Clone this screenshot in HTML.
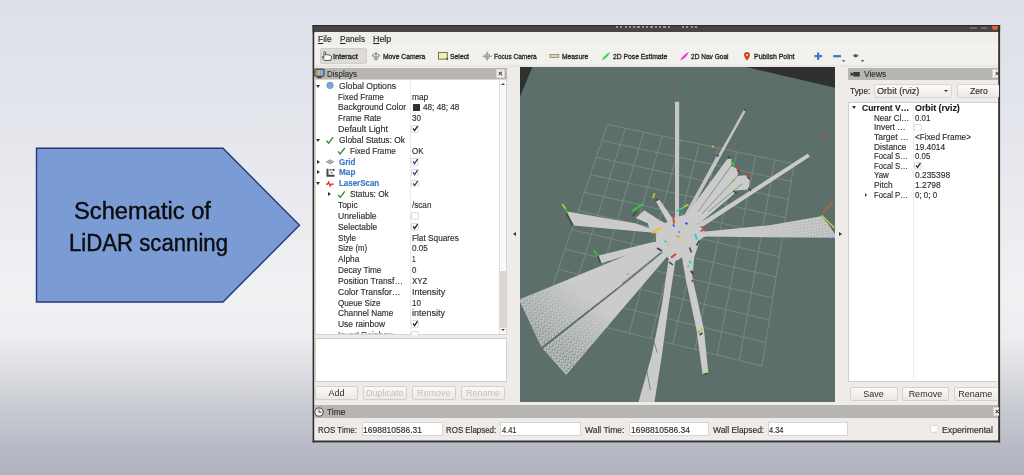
<!DOCTYPE html>
<html><head><meta charset="utf-8">
<style>
*{margin:0;padding:0;box-sizing:border-box}
html,body{width:1024px;height:475px;overflow:hidden}
body{font-family:"Liberation Sans",sans-serif;position:relative;
background:linear-gradient(180deg,#dde0e8 0%,#e5e7ed 30%,#f0f1f3 62%,#ecedf0 71%,#dcdde2 78.7%,#c8cad2 86.3%,#b8bbc6 94%,#aeb2be 100%);}
.a{position:absolute}
.t{position:absolute;white-space:nowrap;line-height:12px;height:12px;transform-origin:0 50%;filter:blur(0.3px);-webkit-text-stroke:0.15px currentColor}
.tb{-webkit-text-stroke:0.3px currentColor}
.t u{text-decoration-thickness:0.7px;text-underline-offset:1px}
#win{position:absolute;left:313px;top:26px;width:686px;height:415px;background:#eeebe9}
.hdr{position:absolute;background:#b8b6b3;height:11.5px}
.white{position:absolute;background:#fff;border:1px solid #d2cec9}
.btn{position:absolute;height:14px;border:1px solid #d3cfca;border-radius:2px;background:linear-gradient(#faf9f8,#ebe9e6);font-size:9px;line-height:12px;text-align:center;color:#2d2d2d;filter:blur(0.3px)}
.btn.dis{color:#c4c0bc}
.inp{position:absolute;height:13.5px;border:1px solid #d9d5d0;background:#fff}
.cb{position:absolute;width:7px;height:7px;border:1px solid #c4c0bb;background:#fff;border-radius:1px}
.cb.on::after{content:"";position:absolute;left:1.3px;top:-0.8px;width:2.2px;height:4.4px;border:solid #222;border-width:0 1.1px 1.1px 0;transform:rotate(40deg)}
.xb{position:absolute;width:9px;height:9px;background:#f4f3f1;border:1px solid #d6d3cf;border-radius:1px}
.xb::before,.xb::after{content:"";position:absolute;left:1.2px;top:3px;width:4.6px;height:1.1px;background:#444;transform:rotate(45deg)}
.xb::after{transform:rotate(-45deg)}
.tri-d{position:absolute;width:0;height:0;border-left:2.4px solid transparent;border-right:2.4px solid transparent;border-top:3.2px solid #333}
.tri-r{position:absolute;width:0;height:0;border-top:2.3px solid transparent;border-bottom:2.3px solid transparent;border-left:3px solid #333}
.tri-u{position:absolute;width:0;height:0;border-left:2.2px solid transparent;border-right:2.2px solid transparent;border-bottom:2.8px solid #444}
.tri-l{position:absolute;width:0;height:0;border-top:2.3px solid transparent;border-bottom:2.3px solid transparent;border-right:3px solid #333}
.clip{clip-path:inset(0 0 7.6px 0)}
#vp{position:absolute;left:520px;top:67px;width:315px;height:335px;background:#5d6f6a;overflow:hidden}
</style></head><body>

<!-- slide arrow -->
<svg class="a" style="left:0;top:0" width="320" height="475">
<polygon points="36.5,148.3 223,148.3 299.5,225.2 223,302 36.5,302" fill="#7a9bd4" stroke="#25397a" stroke-width="1.4" style="filter:blur(0.4px)"/>
</svg>
<div class="a" style="left:74px;top:194.5px;font-size:23px;line-height:32px;color:#0c0c0c;white-space:nowrap;transform-origin:0 0;transform:scaleX(1.03);-webkit-text-stroke:0.4px #0c0c0c;filter:blur(0.45px)">Schematic of</div>
<div class="a" style="left:69px;top:226.8px;font-size:23px;line-height:32px;color:#0c0c0c;white-space:nowrap;transform-origin:0 0;transform:scaleX(0.964);-webkit-text-stroke:0.4px #0c0c0c;filter:blur(0.45px)">LiDAR scanning</div>

<!-- window -->
<div id="win"></div>
<svg class="a" style="left:0;top:0;filter:blur(0.35px)" width="1024" height="475"><rect x="312.6" y="25.1" width="687.5" height="7.3" fill="#474645"/><rect x="312.6" y="25.1" width="687.5" height="1.2" fill="#2c2c2b"/><rect x="312.6" y="25.1" width="1.6" height="417.3" fill="#2e2e2d"/><rect x="998.2" y="25.1" width="1.9" height="417.3" fill="#33322f"/><rect x="312.6" y="440.5" width="687.5" height="1.9" fill="#333231"/></svg>
<!-- title text remnants -->
<div class="a" style="left:616px;top:26.2px;width:53.5px;height:2px;background:repeating-linear-gradient(90deg,#a9a8a6 0 2.2px,#474645 2.2px 4.3px);opacity:.85;filter:blur(0.5px)"></div>
<div class="a" style="left:682px;top:26.2px;width:17px;height:2px;background:repeating-linear-gradient(90deg,#a9a8a6 0 2.2px,#474645 2.2px 4.3px);opacity:.85;filter:blur(0.5px)"></div>
<div class="a" style="left:970px;top:27.4px;width:7px;height:1.4px;background:#6e6d6b;filter:blur(0.6px)"></div><div class="a" style="left:980.5px;top:27.4px;width:6px;height:1.4px;background:#6e6d6b;filter:blur(0.6px)"></div>
<div class="a" style="left:991.8px;top:26.2px;width:6.2px;height:3.4px;background:#e0632a;border-radius:0 0 3px 3px;filter:blur(0.5px)"></div>
<!-- menubar / toolbar backgrounds -->
<div class="a" style="left:314.6px;top:32.4px;width:683.4px;height:12.4px;background:#f0eeeb"></div>
<div class="a" style="left:314.6px;top:44.8px;width:683.4px;height:22px;background:linear-gradient(#f7f6f3 0,#f3f1ed 15%,#f2f0ec 85%,#e6e4e0 100%)"></div>
<div class="a" style="left:319.7px;top:47.8px;width:47.6px;height:16.6px;background:#dddbd8;border:1px solid #d2cfcb;border-radius:2px"></div>

<!-- toolbar icons -->
<svg class="a" style="left:313px;top:47px;filter:blur(0.3px)" width="687" height="19" viewBox="313 47 687 19">
<!-- hand -->
<path d="M324 56 V52.3 q0.75 -1.3 1.5 0 V55 q0.8 -0.9 1.6 0 q0.8 -0.8 1.6 0.2 q0.9 -0.6 1.7 0.3 q1.2 0 1.2 1.4 L331 60.4 H324.3 L322.2 57.5 q-0.3 -1.2 0.8 -0.8 L324 57.9 Z" fill="#fbfbfb" stroke="#3a3a3a" stroke-width="0.85" stroke-linejoin="round"/>
<!-- move camera -->
<g stroke="#777" stroke-width="0.9" fill="none"><path d="M372 55.5 l4 -2.2 l4 2.2 l-4 2.2z"/><path d="M376 52 v8 M373.5 58 l2.5 2.3 l2.5 -2.3"/></g>
<!-- select -->
<rect x="438.5" y="52.5" width="8.8" height="6.6" fill="#f3f0a8" stroke="#555" stroke-width="0.8"/>
<path d="M446 58 l1.8 1.8" stroke="#222" stroke-width="1"/>
<!-- focus camera -->
<g stroke="#888" stroke-width="0.9" fill="none"><circle cx="487.2" cy="56.2" r="2.4"/><path d="M487.2 51.5 v9.4 M482.5 56.2 h9.4"/></g>
<!-- measure -->
<rect x="550" y="54.6" width="8.8" height="3" fill="#d9d6a8" stroke="#777" stroke-width="0.7"/>
<!-- 2D pose -->
<path d="M601.6 60.4 Q604.4 54.6 610.2 52 Q608 57.8 601.6 60.4z" fill="#2fd858"/>
<!-- 2D nav -->
<path d="M680.2 60.4 Q683 54.6 688.8 52 Q686.6 57.8 680.2 60.4z" fill="#e63ad6"/>
<!-- publish point -->
<path d="M747 52 a3 3 0 0 1 3 3 q0 2 -3 5.6 q-3 -3.6 -3 -5.6 a3 3 0 0 1 3 -3z" fill="#d0481c"/><circle cx="747" cy="54.9" r="1" fill="#f6d8c8"/>
<!-- plus / minus / camera -->
<path d="M818.2 52.4 v7.6 M814.4 56.2 h7.6" stroke="#3c78c8" stroke-width="2.2"/>
<path d="M833.2 56.2 h7.8" stroke="#3c78c8" stroke-width="2.2"/>
<path d="M842 60.2 h3.2 l-1.6 1.8z" fill="#333"/>
<path d="M852.4 55.8 q3.2 -3.4 6.6 0 q-3.4 3.2 -6.6 0z" fill="#888"/><circle cx="855.7" cy="55.8" r="1.3" fill="#444"/>
<path d="M861 60.2 h3.2 l-1.6 1.8z" fill="#333"/>
</svg>

<!-- Displays panel -->
<div class="hdr" style="left:315px;top:67.8px;width:191.5px"></div>
<svg class="a" style="left:313.6px;top:68px;filter:blur(0.3px)" width="12" height="12" viewBox="0 0 12 12">
<rect x="0.6" y="1" width="9.6" height="7.4" rx="0.8" fill="#667" stroke="#333" stroke-width="0.7"/>
<rect x="1.5" y="1.9" width="2.6" height="5.6" fill="#dc8478"/><rect x="4.1" y="1.9" width="2.6" height="5.6" fill="#98cc98"/><rect x="6.7" y="1.9" width="2.6" height="5.6" fill="#8cacdc"/>
<rect x="3.4" y="9" width="4" height="1.2" fill="#333"/>
</svg>
<div class="xb" style="left:496px;top:68.6px"></div>
<div class="white" style="left:315px;top:79.3px;width:191.5px;height:255.4px;border-color:#d8d5d0"></div>
<div class="a" style="left:410px;top:80px;width:1px;height:254px;background:#ecebe9"></div>
<!-- scrollbar -->
<div class="a" style="left:499px;top:80px;width:7px;height:254px;background:#fafafa;border-left:1px solid #dcdad7"></div>
<div class="a" style="left:500px;top:270.5px;width:6px;height:57px;background:#d9d8d6"></div>
<div class="tri-u" style="left:500.6px;top:83.4px"></div>
<div class="tri-d" style="left:500.5px;top:329.2px;border-top-color:#444;border-left-width:2.2px;border-right-width:2.2px;border-top-width:2.8px"></div>
<!-- lower white box -->
<div class="white" style="left:315px;top:337.5px;width:191.5px;height:44px"></div>
<!-- buttons -->
<div class="btn" style="left:315px;top:386px;width:43px">Add</div>
<div class="btn dis" style="left:362.6px;top:386px;width:44.3px">Duplicate</div>
<div class="btn dis" style="left:411.5px;top:386px;width:44.5px">Remove</div>
<div class="btn dis" style="left:460.7px;top:386px;width:44.6px">Rename</div>

<!-- tree arrows + icons -->
<div class="tri-d" style="left:316px;top:84.6px"></div>
<div class="tri-d" style="left:316px;top:138.8px"></div>
<div class="tri-r" style="left:316.8px;top:159.5px"></div>
<div class="tri-r" style="left:316.8px;top:170.4px"></div>
<div class="tri-d" style="left:316px;top:182.2px"></div>
<div class="tri-r" style="left:327.8px;top:192.1px"></div>
<svg class="a" style="left:313px;top:79px;filter:blur(0.3px)" width="100" height="130" viewBox="313 79 100 130">
<circle cx="330" cy="85.4" r="3.3" fill="#7ea6d8" stroke="#6a92c6" stroke-width="0.6"/>
<path d="M326.4 140.6 l2.2 2.6 l4.6 -6" stroke="#2f8a3a" stroke-width="1.3" fill="none"/>
<path d="M338 151.4 l2.2 2.6 l4.6 -6" stroke="#2f8a3a" stroke-width="1.3" fill="none"/>
<path d="M338 194.8 l2.2 2.6 l4.6 -6" stroke="#2f8a3a" stroke-width="1.3" fill="none"/>
<!-- grid icon -->
<g stroke="#777" stroke-width="0.8" fill="none"><path d="M326.4 161.8 l3.6 -2 l3.6 2 l-3.6 2z M328.2 160.8 l3.6 2 M331.8 160.8 l-3.6 2"/></g>
<!-- map icon -->
<path d="M326.5 168.8 h2 v6 h6 v2 h-8z" fill="#444"/><rect x="329.6" y="169" width="1.8" height="1.8" fill="#666"/><rect x="332.4" y="169" width="2" height="1.8" fill="#333"/><rect x="330.5" y="172" width="2" height="1.6" fill="#888"/>
<!-- laserscan icon -->
<path d="M326 184.2 h1.6 l1 -2.2 l1.6 4 l1 -1.8 h2.6" stroke="#e02828" stroke-width="1.2" fill="none"/>
</svg>
<!-- colour swatch -->
<div class="a" style="left:412.8px;top:104.3px;width:7.2px;height:7.2px;background:#303030"></div>
<!-- checkboxes -->

<!-- splitter arrows -->
<div class="tri-l" style="left:512.8px;top:232.3px"></div>
<div class="tri-r" style="left:838.5px;top:232.3px"></div>

<!-- viewport -->
<div id="vp"><svg width="316" height="335" viewBox="0 0 316 335" style="position:absolute;left:0;top:0">
<defs>
<pattern id="dots" width="4.2" height="4" patternUnits="userSpaceOnUse" patternTransform="rotate(-38)"><rect width="4.2" height="4" fill="#cdcfcf"/><g fill="#5c706c"><rect x="0.2" y="0.3" width="1.4" height="1.1"/><rect x="2.3" y="1.5" width="1.3" height="1.1"/><rect x="0.7" y="2.7" width="1.4" height="1.1"/><rect x="3.1" y="3.2" width="1.1" height="0.8"/><rect x="3.1" y="0" width="1.1" height="0.4"/></g></pattern>
<linearGradient id="fade1" gradientUnits="userSpaceOnUse" x1="80" y1="195" x2="20" y2="268"><stop offset="0" stop-color="#fff" stop-opacity="0"/><stop offset="0.35" stop-color="#fff" stop-opacity="0"/><stop offset="1" stop-color="#fff" stop-opacity="1"/></linearGradient>
<pattern id="dots2" width="3" height="3" patternUnits="userSpaceOnUse" patternTransform="rotate(-8)"><rect width="3" height="3" fill="#cbcbcb"/><rect x="0.4" y="0.4" width="1.2" height="1.2" fill="#66797a"/></pattern>
<linearGradient id="fade2" gradientUnits="userSpaceOnUse" x1="220" y1="0" x2="316" y2="0"><stop offset="0" stop-color="#fff" stop-opacity="0"/><stop offset="1" stop-color="#fff" stop-opacity="0.8"/></linearGradient>
<mask id="m2"><rect width="316" height="335" fill="url(#fade2)"/></mask>
<mask id="m1"><rect width="316" height="335" fill="url(#fade1)"/></mask>
<filter id="b"><feGaussianBlur stdDeviation="0.45"/></filter>
</defs>
<polygon points="0,0 12.5,0 0,29.5" fill="#303030"/>
<polygon points="226,0 316,0 316,21" fill="#303030"/>
<g stroke="#7d918b" stroke-width="0.75" fill="none" filter="url(#b)"><line x1="87.4" y1="57.4" x2="24.0" y2="245.0"/><line x1="87.4" y1="57.4" x2="274.0" y2="97.0"/><line x1="105.5" y1="61.2" x2="45.1" y2="250.2"/><line x1="81.9" y1="73.6" x2="271.2" y2="114.4"/><line x1="123.8" y1="65.1" x2="66.3" y2="255.5"/><line x1="76.3" y1="90.3" x2="268.4" y2="132.3"/><line x1="142.1" y1="69.0" x2="87.7" y2="260.8"/><line x1="70.5" y1="107.5" x2="265.5" y2="150.8"/><line x1="160.6" y1="72.9" x2="109.2" y2="266.1"/><line x1="64.4" y1="125.3" x2="262.5" y2="169.9"/><line x1="179.2" y1="76.9" x2="130.9" y2="271.5"/><line x1="58.2" y1="143.7" x2="259.3" y2="189.6"/><line x1="197.9" y1="80.9" x2="152.8" y2="276.9"/><line x1="51.8" y1="162.6" x2="256.1" y2="210.0"/><line x1="216.8" y1="84.9" x2="174.9" y2="282.4"/><line x1="45.2" y1="182.2" x2="252.8" y2="231.1"/><line x1="235.7" y1="88.9" x2="197.1" y2="287.9"/><line x1="38.4" y1="202.4" x2="249.3" y2="252.9"/><line x1="254.8" y1="92.9" x2="219.4" y2="293.4"/><line x1="31.3" y1="223.3" x2="245.7" y2="275.6"/><line x1="274.0" y1="97.0" x2="242.0" y2="299.0"/><line x1="24.0" y1="245.0" x2="242.0" y2="299.0"/></g>
<g filter="url(#b)"><polygon points="155.0,34.8 159.2,34.8 159.0,161.0 155.0,161.0" fill="#c6c6c6" /><polygon points="224.0,42.6 225.9,43.8 167.0,151.0 163.6,149.4" fill="#c3c3c3" /><polygon points="196.6,89.2 198.4,90.3 166.0,153.0 162.6,151.4" fill="#c3c3c3" /><polygon points="206.9,92.5 211.5,91.0 211.0,99.0 218.5,102.0 217.5,109.0 227.5,108.0 230.0,111.5 228.5,122.5 216.0,123.5 214.0,127.0 180.0,156.0 166.0,161.0 164.0,151.0" fill="#cbcbcb" /><polygon points="287.6,86.8 290.0,89.4 183.0,159.5 175.0,159.0" fill="#cbcbcb" /><polygon points="301.7,149.3 308.0,157.0 315.0,167.5 315.0,170.4 250.0,170.2 186.0,169.5 176.0,173.0 170.0,163.0 186.0,164.5 250.0,158.2" fill="#cbcbcb" /><polygon points="182.5,306.8 188.3,306.0 184.0,263.0 173.0,213.0 168.0,185.0 160.0,179.0 165.9,213.0 176.5,263.0" fill="#cbcbcb" /><polygon points="118.5,335.0 134.5,335.0 141.9,288.0 148.7,238.0 155.5,193.0 157.5,187.0 152.0,183.0 148.5,193.0 141.9,238.0 131.8,288.0" fill="#cbcbcb" /><polygon points="-0.9,232.7 21.4,279.8 108.0,212.6 144.0,183.0 150.0,173.0 131.5,178.0" fill="#cbcbcb" /><polygon points="23.0,281.8 46.2,307.8 145.2,191.8 154.0,181.0 144.0,184.5 109.0,213.4" fill="#cbcbcb" /><polygon points="77.9,188.8 80.7,196.4 132.9,180.3 148.0,173.0 131.0,175.5" fill="#cbcbcb" /><polygon points="45.7,144.3 53.3,158.5 131.0,165.5 148.0,167.0 129.0,161.3 115.8,156.6" fill="#cbcbcb" /><polygon points="115.8,150.9 124.3,143.3 140.4,153.7 152.0,159.0 148.0,169.0 138.5,165.0 129.0,161.3 128.1,156.6" fill="#cbcbcb" /><polygon points="135.7,134.0 139.3,132.6 156.5,157.0 151.0,161.0" fill="#cbcbcb" /><polygon points="142.0,159.0 152.0,151.0 164.0,148.0 174.0,155.0 183.0,162.0 186.0,167.0 180.0,173.0 177.0,182.0 174.0,191.0 173.0,204.0 168.0,201.0 164.0,189.0 158.0,193.0 152.0,195.0 144.0,187.0 136.0,179.0 136.0,167.0" fill="#cbcbcb" /></g>
<g mask="url(#m1)">
<polygon points="-0.9,232.7 21.4,279.8 108.0,212.6 144.0,183.0 150.0,173.0 131.5,178.0" fill="url(#dots)" />
<polygon points="23.0,281.8 46.2,307.8 145.2,191.8 154.0,181.0 144.0,184.5 109.0,213.4" fill="url(#dots)" />
</g>
<g stroke="#6f817d" stroke-width="0.9" filter="url(#b)" opacity="0.85"><line x1="211" y1="99" x2="178" y2="145"/><line x1="217.5" y1="109" x2="182" y2="147"/><line x1="222" y1="117" x2="188" y2="145"/></g>
<g mask="url(#m2)"><polygon points="301.7,149.3 308.0,157.0 315.0,167.5 315.0,170.4 250.0,170.2 186.0,169.5 186.0,164.5 250.0,158.2" fill="url(#dots2)" /></g>
<g stroke="#3d4a48" stroke-width="1.6" filter="url(#b)"><line x1="207.8" y1="89.8" x2="211.2" y2="91.3"/><line x1="217.0" y1="103.0" x2="220.0" y2="105.0"/><line x1="227.0" y1="109.5" x2="230.0" y2="112.5"/><line x1="228.0" y1="121.2" x2="231.0" y2="123.8"/><line x1="213.5" y1="124.0" x2="216.5" y2="126.0"/><line x1="46.0" y1="145.5" x2="53.0" y2="158.5"/><line x1="112.5" y1="149.0" x2="116.5" y2="145.0"/><line x1="135.5" y1="133.8" x2="138.5" y2="132.2"/><line x1="77.9" y1="188.8" x2="80.7" y2="196.4"/><line x1="184.5" y1="307.3" x2="187.5" y2="306.3"/><line x1="179.5" y1="268.0" x2="182.5" y2="266.0"/><line x1="169.5" y1="180.5" x2="171.5" y2="185.5"/><line x1="137.0" y1="181.0" x2="142.0" y2="184.0"/><line x1="149.0" y1="195.2" x2="153.0" y2="197.8"/><line x1="170.5" y1="204.2" x2="173.5" y2="206.8"/><line x1="176.5" y1="178.5" x2="179.5" y2="173.5"/><line x1="196.3" y1="87.9" x2="198.7" y2="89.3"/><line x1="224.0" y1="42.5" x2="226.0" y2="43.5"/></g>
<g stroke="#66787a" stroke-width="0.8" filter="url(#b)"><line x1="131.79999999999995" y1="275.4" x2="134.60000000000002" y2="285.6" transform="translate(2.5,0)"/><line x1="126.60000000000002" y1="302.7" x2="130.39999999999998" y2="323.2"/><line x1="102" y1="216.60000000000002" x2="140" y2="186" stroke="#55696a" stroke-width="0.7"/></g>
<g stroke-width="1.8" stroke-linecap="butt" filter="url(#b)"><line x1="154.3" y1="24.5" x2="156.5" y2="24.5" stroke="#b8405a" stroke-width="2"/><line x1="301.7" y1="70.0" x2="304.3" y2="70.0" stroke="#b8405a" stroke-width="2.4"/><line x1="208.0" y1="81.5" x2="211.0" y2="82.5" stroke="#c8503c" stroke-width="1.6"/><line x1="192.2" y1="78.8" x2="193.8" y2="80.2" stroke="#cc4" stroke-width="1.6"/><line x1="195.0" y1="81.0" x2="197.0" y2="83.0" stroke="#c44" stroke-width="1.4"/><line x1="303.2" y1="146.3" x2="312.8" y2="133.7" stroke="#c8642e" stroke-width="1.3"/><line x1="301.7" y1="148.1" x2="314.3" y2="160.8" stroke="#c6d62e" stroke-width="1.3"/><line x1="45.8" y1="142.0" x2="42.2" y2="137.0" stroke="#b4d23a" stroke-width="1.6"/><line x1="45.8" y1="142.5" x2="47.8" y2="146.5" stroke="#3cbc3c" stroke-width="1.8"/><line x1="112.0" y1="144.3" x2="123.4" y2="136.7" stroke="#3cc83c" stroke-width="1.8"/><line x1="132.9" y1="130.9" x2="134.7" y2="126.2" stroke="#b8d030" stroke-width="1.8"/><line x1="73.7" y1="183.0" x2="77.5" y2="188.4" stroke="#3cbc3c" stroke-width="1.8"/><line x1="180.5" y1="263.5" x2="183.5" y2="261.5" stroke="#9cdc30" stroke-width="2"/><line x1="177.8" y1="265.0" x2="179.8" y2="265.0" stroke="#e88440" stroke-width="2"/><line x1="184.8" y1="304.1" x2="186.6" y2="304.7" stroke="#d2dc30" stroke-width="2"/><line x1="211.2" y1="94.5" x2="213.8" y2="98.5" stroke="#48cc48" stroke-width="1.8"/><line x1="216.5" y1="100.8" x2="219.0" y2="102.8" stroke="#dc3c3c" stroke-width="2"/><line x1="226.1" y1="107.5" x2="229.1" y2="109.5" stroke="#dc3c3c" stroke-width="2.2"/><line x1="212.8" y1="114.2" x2="214.2" y2="112.8" stroke="#48cc48" stroke-width="1.6"/><line x1="212.1" y1="116.5" x2="213.9" y2="116.5" stroke="#dcdc40" stroke-width="1.6"/><line x1="154.0" y1="156.6" x2="153.2" y2="149.1" stroke="#b85c30" stroke-width="2"/><line x1="156.5" y1="144.3" x2="165.0" y2="139.5" stroke="#30d090" stroke-width="1.8"/><line x1="164.5" y1="139.5" x2="168.5" y2="137.5" stroke="#c8d030" stroke-width="1.8"/><line x1="165.5" y1="155.9" x2="167.3" y2="157.1" stroke="#3c3cdc" stroke-width="2"/><line x1="153.2" y1="157.4" x2="154.2" y2="159.6" stroke="#3c50dc" stroke-width="1.8"/><line x1="180.5" y1="164.1" x2="186.2" y2="161.6" stroke="#dc3c30" stroke-width="2"/><line x1="175.0" y1="167.0" x2="177.0" y2="172.6" stroke="#30d0d0" stroke-width="2.2"/><line x1="132.2" y1="166.0" x2="140.8" y2="160.3" stroke="#eac030" stroke-width="2.2"/><line x1="127.0" y1="152.5" x2="129.0" y2="152.5" stroke="#c8d04c" stroke-width="1.6"/><line x1="144.6" y1="173.7" x2="146.6" y2="175.3" stroke="#30d0d0" stroke-width="2"/><line x1="147.4" y1="176.2" x2="149.4" y2="177.4" stroke="#eacc30" stroke-width="2"/><line x1="151.2" y1="190.6" x2="156.0" y2="186.8" stroke="#e04428" stroke-width="2"/><line x1="169.2" y1="193.6" x2="171.2" y2="196.4" stroke="#30d0c0" stroke-width="2"/><line x1="167.4" y1="199.2" x2="169.2" y2="199.2" stroke="#50d050" stroke-width="1.8"/><line x1="171.8" y1="212.9" x2="173.2" y2="215.1" stroke="#a83c3c" stroke-width="1.6"/><line x1="156.5" y1="169.0" x2="159.5" y2="170.0" stroke="#e88440" stroke-width="1.6"/><line x1="162.0" y1="173.5" x2="164.0" y2="172.5" stroke="#cccc3c" stroke-width="1.6"/><line x1="158.0" y1="164.8" x2="160.0" y2="165.2" stroke="#3c8cdc" stroke-width="1.4"/><line x1="107.0" y1="206.7" x2="109.0" y2="207.3" stroke="#e8943c" stroke-width="1.6"/></g>
</svg></div>

<!-- Views panel -->
<div class="hdr" style="left:848.3px;top:68.3px;width:149.7px"></div>
<svg class="a" style="left:850px;top:70px;filter:blur(0.3px)" width="11" height="8" viewBox="0 0 11 8"><path d="M0.6 2.2 l2.6 1.4 v-1.6 h6.6 v4.4 h-6.6 v-1.6 l-2.6 1.4z" fill="#3a3a3a"/></svg>
<div class="xb" style="left:992.4px;top:69px;width:6px;border-right:none"></div>
<div class="inp" style="left:873.9px;top:84px;width:78.2px;height:13.6px;background:linear-gradient(#fbfaf9,#efedea);border-radius:2px"></div>
<div class="tri-d" style="left:944.4px;top:90.4px;border-left-width:2px;border-right-width:2px;border-top-width:2.6px"></div>
<div class="inp" style="left:956.5px;top:84px;width:42px;height:13.6px;background:linear-gradient(#fbfaf9,#ebe9e6);border-radius:2px;border-right:none"></div>
<div class="white" style="left:848.2px;top:102.3px;width:150px;height:280px;border-right:none"></div>
<div class="a" style="left:912.6px;top:103px;width:1px;height:278.6px;background:#ecebe9"></div>
<div class="tri-d" style="left:852px;top:106px"></div>
<div class="tri-r" style="left:864.6px;top:192.8px;border-left-width:2.6px;border-top-width:2px;border-bottom-width:2px"></div>
<div class="btn" style="left:849.5px;top:386.6px;width:48px">Save</div>
<div class="btn" style="left:901.7px;top:386.6px;width:47.4px">Remove</div>
<div class="btn" style="left:953.6px;top:386.6px;width:44.3px;border-right:none;border-radius:2px 0 0 2px;padding-right:2px">Rename</div>

<!-- Time panel -->
<div class="hdr" style="left:314.3px;top:405.4px;width:683.7px;height:12.2px"></div>
<svg class="a" style="left:314px;top:407px;filter:blur(0.3px)" width="10" height="10" viewBox="0 0 10 10"><circle cx="5" cy="5.1" r="4.1" fill="#f6f6f6" stroke="#3a3a3a" stroke-width="0.9"/><path d="M5 2.6 V5.2 H7.4" stroke="#333" stroke-width="0.9" fill="none"/></svg>
<div class="xb" style="left:992.8px;top:407.4px;width:6px;height:8.4px;border-right:none"></div>
<div class="inp" style="left:361.5px;top:422.3px;width:81px"></div>
<div class="inp" style="left:500.4px;top:422.3px;width:81px"></div>
<div class="inp" style="left:628.8px;top:422.3px;width:80.4px"></div>
<div class="inp" style="left:767.7px;top:422.3px;width:80px"></div>

<svg class="a" style="left:411.1px;top:125.3px;filter:blur(0.3px)" width="7.8" height="7.8" viewBox="-0.5 -0.5 7.8 7.8"><rect x="0" y="0" width="6.8" height="6.8" rx="0.8" fill="#fff" stroke="#d0ced2" stroke-width="0.8"/><path d="M1.63 2.86 L3.06 5.03 L6.12 0.68" stroke="#1e1e1e" stroke-width="1.25" fill="none"/></svg>
<svg class="a" style="left:411.1px;top:157.8px;filter:blur(0.3px)" width="7.8" height="7.8" viewBox="-0.5 -0.5 7.8 7.8"><rect x="0" y="0" width="6.8" height="6.8" rx="0.8" fill="#fff" stroke="#d0ced2" stroke-width="0.8"/><path d="M1.63 2.86 L3.06 5.03 L6.12 0.68" stroke="#2b3f78" stroke-width="1.25" fill="none"/></svg>
<svg class="a" style="left:411.1px;top:168.6px;filter:blur(0.3px)" width="7.8" height="7.8" viewBox="-0.5 -0.5 7.8 7.8"><rect x="0" y="0" width="6.8" height="6.8" rx="0.8" fill="#fff" stroke="#d0ced2" stroke-width="0.8"/><path d="M1.63 2.86 L3.06 5.03 L6.12 0.68" stroke="#2b3f78" stroke-width="1.25" fill="none"/></svg>
<svg class="a" style="left:411.1px;top:179.5px;filter:blur(0.3px)" width="7.8" height="7.8" viewBox="-0.5 -0.5 7.8 7.8"><rect x="0" y="0" width="6.8" height="6.8" rx="0.8" fill="#fff" stroke="#d0ced2" stroke-width="0.8"/><path d="M1.63 2.86 L3.06 5.03 L6.12 0.68" stroke="#2b3f78" stroke-width="1.25" fill="none"/></svg>
<svg class="a" style="left:411.1px;top:212.0px;filter:blur(0.3px)" width="7.8" height="7.8" viewBox="-0.5 -0.5 7.8 7.8"><rect x="0" y="0" width="6.8" height="6.8" rx="0.8" fill="#fff" stroke="#d0ced2" stroke-width="0.8"/></svg>
<svg class="a" style="left:411.1px;top:222.8px;filter:blur(0.3px)" width="7.8" height="7.8" viewBox="-0.5 -0.5 7.8 7.8"><rect x="0" y="0" width="6.8" height="6.8" rx="0.8" fill="#fff" stroke="#d0ced2" stroke-width="0.8"/><path d="M1.63 2.86 L3.06 5.03 L6.12 0.68" stroke="#1e1e1e" stroke-width="1.25" fill="none"/></svg>
<svg class="a" style="left:411.1px;top:320.4px;filter:blur(0.3px)" width="7.8" height="7.8" viewBox="-0.5 -0.5 7.8 7.8"><rect x="0" y="0" width="6.8" height="6.8" rx="0.8" fill="#fff" stroke="#d0ced2" stroke-width="0.8"/><path d="M1.63 2.86 L3.06 5.03 L6.12 0.68" stroke="#1e1e1e" stroke-width="1.25" fill="none"/></svg>
<svg class="a" style="left:411.1px;top:331.2px;filter:blur(0.3px)" width="7.8" height="3.4" viewBox="-0.5 -0.5 7.8 3.4"><rect x="0" y="0" width="6.8" height="6.8" rx="0.8" fill="#fff" stroke="#d0ced2" stroke-width="0.8"/></svg>
<svg class="a" style="left:914.1px;top:123.5px;filter:blur(0.3px)" width="7.6" height="7.6" viewBox="-0.5 -0.5 7.6 7.6"><rect x="0" y="0" width="6.6" height="6.6" rx="0.8" fill="#fff" stroke="#d0ced2" stroke-width="0.8"/></svg>
<svg class="a" style="left:914.1px;top:162.1px;filter:blur(0.3px)" width="7.6" height="7.6" viewBox="-0.5 -0.5 7.6 7.6"><rect x="0" y="0" width="6.6" height="6.6" rx="0.8" fill="#fff" stroke="#d0ced2" stroke-width="0.8"/><path d="M1.58 2.77 L2.97 4.88 L5.94 0.66" stroke="#1e1e1e" stroke-width="1.25" fill="none"/></svg>
<svg class="a" style="left:929.7px;top:425.1px;filter:blur(0.3px)" width="7.8" height="7.8" viewBox="-0.5 -0.5 7.8 7.8"><rect x="0" y="0" width="6.8" height="6.8" rx="0.8" fill="#fff" stroke="#d0ced2" stroke-width="0.8"/></svg>
<!-- all text -->
<div class="t " style="left:317.9px;top:33.0px;font-size:9.8px;color:#222;transform:scaleX(0.861);"><u>F</u>ile</div>
<div class="t " style="left:340.0px;top:33.0px;font-size:9.8px;color:#222;transform:scaleX(0.834);"><u>P</u>anels</div>
<div class="t " style="left:373.4px;top:33.0px;font-size:9.8px;color:#222;transform:scaleX(0.903);"><u>H</u>elp</div>
<div class="t tb" style="left:333.3px;top:50.7px;font-size:7.4px;color:#222;transform:scaleX(1.002);">Interact</div>
<div class="t tb" style="left:382.7px;top:50.7px;font-size:7.4px;color:#222;transform:scaleX(0.911);">Move Camera</div>
<div class="t tb" style="left:449.6px;top:50.7px;font-size:7.4px;color:#222;transform:scaleX(0.925);">Select</div>
<div class="t tb" style="left:494.3px;top:50.7px;font-size:7.4px;color:#222;transform:scaleX(0.881);">Focus Camera</div>
<div class="t tb" style="left:561.6px;top:50.7px;font-size:7.4px;color:#222;transform:scaleX(0.911);">Measure</div>
<div class="t tb" style="left:612.8px;top:50.7px;font-size:7.4px;color:#222;transform:scaleX(0.916);">2D Pose Estimate</div>
<div class="t tb" style="left:691.4px;top:50.7px;font-size:7.4px;color:#222;transform:scaleX(0.886);">2D Nav Goal</div>
<div class="t tb" style="left:753.6px;top:50.7px;font-size:7.4px;color:#222;transform:scaleX(0.939);">Publish Point</div>
<div class="t " style="left:327.0px;top:67.9px;font-size:9.2px;color:#2d2d2d;transform:scaleX(0.864);">Displays</div>
<div class="t " style="left:863.6px;top:68.0px;font-size:9.2px;color:#2d2d2d;transform:scaleX(0.908);">Views</div>
<div class="t " style="left:327.4px;top:405.5px;font-size:9.2px;color:#2d2d2d;transform:scaleX(0.921);">Time</div>
<div class="t " style="left:338.7px;top:79.7px;font-size:9.2px;color:#2d2d2d;transform:scaleX(0.938);">Global Options</div>
<div class="t " style="left:337.6px;top:90.5px;font-size:9.2px;color:#2d2d2d;transform:scaleX(0.890);">Fixed Frame</div>
<div class="t " style="left:411.5px;top:90.5px;font-size:9.2px;color:#2d2d2d;transform:scaleX(0.906);">map</div>
<div class="t " style="left:337.6px;top:101.4px;font-size:9.2px;color:#2d2d2d;transform:scaleX(0.925);">Background Color</div>
<div class="t " style="left:422.5px;top:101.4px;font-size:9.2px;color:#2d2d2d;transform:scaleX(0.891);">48; 48; 48</div>
<div class="t " style="left:337.6px;top:112.2px;font-size:9.2px;color:#2d2d2d;transform:scaleX(0.890);">Frame Rate</div>
<div class="t " style="left:411.5px;top:112.2px;font-size:9.2px;color:#2d2d2d;transform:scaleX(0.870);">30</div>
<div class="t " style="left:337.6px;top:123.1px;font-size:9.2px;color:#2d2d2d;transform:scaleX(0.969);">Default Light</div>
<div class="t " style="left:338.7px;top:133.9px;font-size:9.2px;color:#2d2d2d;transform:scaleX(0.916);">Global Status: Ok</div>
<div class="t " style="left:350.0px;top:144.7px;font-size:9.2px;color:#2d2d2d;transform:scaleX(0.886);">Fixed Frame</div>
<div class="t " style="left:411.5px;top:144.7px;font-size:9.2px;color:#2d2d2d;transform:scaleX(0.858);">OK</div>
<div class="t " style="left:338.7px;top:155.6px;font-size:9.2px;color:#3577cc;transform:scaleX(0.868);font-weight:bold;">Grid</div>
<div class="t " style="left:338.7px;top:166.4px;font-size:9.2px;color:#3577cc;transform:scaleX(0.893);font-weight:bold;">Map</div>
<div class="t " style="left:338.7px;top:177.3px;font-size:9.2px;color:#3577cc;transform:scaleX(0.865);font-weight:bold;">LaserScan</div>
<div class="t " style="left:350.0px;top:188.1px;font-size:9.2px;color:#2d2d2d;transform:scaleX(0.904);">Status: Ok</div>
<div class="t " style="left:337.6px;top:198.9px;font-size:9.2px;color:#2d2d2d;transform:scaleX(0.914);">Topic</div>
<div class="t " style="left:411.5px;top:198.9px;font-size:9.2px;color:#2d2d2d;transform:scaleX(0.883);">/scan</div>
<div class="t " style="left:337.6px;top:209.8px;font-size:9.2px;color:#2d2d2d;transform:scaleX(0.933);">Unreliable</div>
<div class="t " style="left:337.6px;top:220.6px;font-size:9.2px;color:#2d2d2d;transform:scaleX(0.914);">Selectable</div>
<div class="t " style="left:337.6px;top:231.5px;font-size:9.2px;color:#2d2d2d;transform:scaleX(0.886);">Style</div>
<div class="t " style="left:411.5px;top:231.5px;font-size:9.2px;color:#2d2d2d;transform:scaleX(0.898);">Flat Squares</div>
<div class="t " style="left:337.6px;top:242.3px;font-size:9.2px;color:#2d2d2d;transform:scaleX(0.851);">Size (m)</div>
<div class="t " style="left:411.5px;top:242.3px;font-size:9.2px;color:#2d2d2d;transform:scaleX(0.883);">0.05</div>
<div class="t " style="left:337.6px;top:253.1px;font-size:9.2px;color:#2d2d2d;transform:scaleX(0.906);">Alpha</div>
<div class="t " style="left:411.5px;top:253.1px;font-size:9.2px;color:#2d2d2d;transform:scaleX(0.702);">1</div>
<div class="t " style="left:337.6px;top:264.0px;font-size:9.2px;color:#2d2d2d;transform:scaleX(0.895);">Decay Time</div>
<div class="t " style="left:411.5px;top:264.0px;font-size:9.2px;color:#2d2d2d;transform:scaleX(0.859);">0</div>
<div class="t " style="left:337.6px;top:274.8px;font-size:9.2px;color:#2d2d2d;transform:scaleX(0.928);">Position Transf…</div>
<div class="t " style="left:411.5px;top:274.8px;font-size:9.2px;color:#2d2d2d;transform:scaleX(0.850);">XYZ</div>
<div class="t " style="left:337.6px;top:285.7px;font-size:9.2px;color:#2d2d2d;transform:scaleX(0.926);">Color Transfor…</div>
<div class="t " style="left:411.5px;top:285.7px;font-size:9.2px;color:#2d2d2d;transform:scaleX(0.967);">Intensity</div>
<div class="t " style="left:337.6px;top:296.5px;font-size:9.2px;color:#2d2d2d;transform:scaleX(0.883);">Queue Size</div>
<div class="t " style="left:411.5px;top:296.5px;font-size:9.2px;color:#2d2d2d;transform:scaleX(0.870);">10</div>
<div class="t " style="left:337.6px;top:307.3px;font-size:9.2px;color:#2d2d2d;transform:scaleX(0.904);">Channel Name</div>
<div class="t " style="left:411.5px;top:307.3px;font-size:9.2px;color:#2d2d2d;transform:scaleX(0.979);">intensity</div>
<div class="t " style="left:337.6px;top:318.2px;font-size:9.2px;color:#2d2d2d;transform:scaleX(0.920);">Use rainbow</div>
<div class="t clip" style="left:337.6px;top:329.0px;font-size:9.2px;color:#2d2d2d;transform:scaleX(0.914);">Invert Rainbow</div>
<div class="t " style="left:849.7px;top:84.8px;font-size:9.2px;color:#2d2d2d;transform:scaleX(0.907);">Type:</div>
<div class="t " style="left:876.6px;top:84.8px;font-size:9.2px;color:#2d2d2d;transform:scaleX(0.989);">Orbit (rviz)</div>
<div class="t " style="left:969.8px;top:84.8px;font-size:9.2px;color:#2d2d2d;transform:scaleX(0.936);">Zero</div>
<div class="t " style="left:862.1px;top:101.9px;font-size:8.8px;color:#1c1c1c;transform:scaleX(0.965);font-weight:bold;">Current V…</div>
<div class="t " style="left:914.6px;top:101.9px;font-size:8.8px;color:#1c1c1c;transform:scaleX(1.007);font-weight:bold;">Orbit (rviz)</div>
<div class="t " style="left:873.9px;top:111.6px;font-size:8.8px;color:#2d2d2d;transform:scaleX(0.917);">Near Cl…</div>
<div class="t " style="left:914.6px;top:111.6px;font-size:8.8px;color:#2d2d2d;transform:scaleX(0.893);">0.01</div>
<div class="t " style="left:873.9px;top:121.2px;font-size:8.8px;color:#2d2d2d;transform:scaleX(0.950);">Invert …</div>
<div class="t " style="left:873.9px;top:130.8px;font-size:8.8px;color:#2d2d2d;transform:scaleX(0.966);">Target …</div>
<div class="t " style="left:914.6px;top:130.8px;font-size:8.8px;color:#2d2d2d;transform:scaleX(0.939);">&lt;Fixed Frame&gt;</div>
<div class="t " style="left:873.9px;top:140.5px;font-size:8.8px;color:#2d2d2d;transform:scaleX(0.949);">Distance</div>
<div class="t " style="left:914.6px;top:140.5px;font-size:8.8px;color:#2d2d2d;transform:scaleX(0.946);">19.4014</div>
<div class="t " style="left:873.9px;top:150.1px;font-size:8.8px;color:#2d2d2d;transform:scaleX(0.878);">Focal S…</div>
<div class="t " style="left:914.6px;top:150.1px;font-size:8.8px;color:#2d2d2d;transform:scaleX(0.893);">0.05</div>
<div class="t " style="left:873.9px;top:159.8px;font-size:8.8px;color:#2d2d2d;transform:scaleX(0.878);">Focal S…</div>
<div class="t " style="left:873.9px;top:169.4px;font-size:8.8px;color:#2d2d2d;transform:scaleX(0.899);">Yaw</div>
<div class="t " style="left:914.6px;top:169.4px;font-size:8.8px;color:#2d2d2d;transform:scaleX(0.956);">0.235398</div>
<div class="t " style="left:873.9px;top:179.1px;font-size:8.8px;color:#2d2d2d;transform:scaleX(0.951);">Pitch</div>
<div class="t " style="left:914.6px;top:179.1px;font-size:8.8px;color:#2d2d2d;transform:scaleX(0.955);">1.2798</div>
<div class="t " style="left:873.9px;top:188.8px;font-size:8.8px;color:#2d2d2d;transform:scaleX(0.878);">Focal P…</div>
<div class="t " style="left:914.6px;top:188.8px;font-size:8.8px;color:#2d2d2d;transform:scaleX(0.903);">0; 0; 0</div>
<div class="t " style="left:318.3px;top:424.0px;font-size:8.8px;color:#2d2d2d;transform:scaleX(0.907);">ROS Time:</div>
<div class="t " style="left:363.2px;top:424.0px;font-size:8.8px;color:#2d2d2d;transform:scaleX(0.965);">1698810586.31</div>
<div class="t " style="left:446.0px;top:424.0px;font-size:8.8px;color:#2d2d2d;transform:scaleX(0.900);">ROS Elapsed:</div>
<div class="t " style="left:502.2px;top:424.0px;font-size:8.8px;color:#2d2d2d;transform:scaleX(0.847);">4.41</div>
<div class="t " style="left:584.8px;top:424.0px;font-size:8.8px;color:#2d2d2d;transform:scaleX(0.967);">Wall Time:</div>
<div class="t " style="left:630.6px;top:424.0px;font-size:8.8px;color:#2d2d2d;transform:scaleX(0.965);">1698810586.34</div>
<div class="t " style="left:712.6px;top:424.0px;font-size:8.8px;color:#2d2d2d;transform:scaleX(0.958);">Wall Elapsed:</div>
<div class="t " style="left:769.3px;top:424.0px;font-size:8.8px;color:#2d2d2d;transform:scaleX(0.847);">4.34</div>
<div class="t " style="left:941.5px;top:424.0px;font-size:8.8px;color:#2d2d2d;transform:scaleX(0.991);">Experimental</div>

</body></html>
